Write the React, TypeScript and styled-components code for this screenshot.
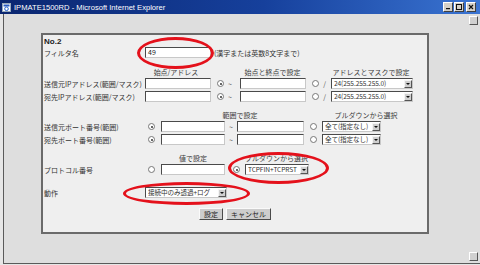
import React from 'react';
import styled, { createGlobalStyle, css } from 'styled-components';

const GlobalStyle = createGlobalStyle`
  html, body { margin: 0; padding: 0; background: #dcdcdc; }
  body { font-family: "Noto Sans CJK JP", "Liberation Sans", sans-serif; }
`

const Window = styled.div`
  width: 480px;
  height: 265px;
  display: flex;
  flex-direction: column;
  background: #e6e6e6;
  overflow: hidden;
`
const TitleBar = styled.div`
  height: 14px;
  flex: none;
  display: flex;
  align-items: center;
  padding: 0 4px 0 2px;
  background: linear-gradient(to right, #0a2670 0%, #16409c 55%, #3a74d2 100%);
  color: #fff;
  font-family: "Liberation Sans", Arial, sans-serif;
  font-size: 7.6px;
`
const TitleText = styled.span`
  margin-left: 3px;
  white-space: nowrap;
`
const TitleButtons = styled.div`
  margin-left: auto;
  display: flex;
  gap: 1px;
`
const TitleBtn = styled.span<{ $gap?: number }>`
  width: 8px;
  height: 8px;
  display: flex;
  align-items: center;
  justify-content: center;
  margin-left: ${p => p.$gap || 0}px;
  background: #d4d0c8;
  border: 1px solid;
  border-color: #fff #404040 #404040 #fff;
`
const Body = styled.div`
  flex: 1;
  display: flex;
  padding: 0 0 1px 3px;
`
const Page = styled.div`
  flex: 1;
  border-left: 1px solid #5a5a5a;
  border-bottom: 1px solid #5a5a5a;
  background: #dedede;
  padding: 19px 0 0 37px;
`
const ScrollCol = styled.div`
  width: 13px;
  display: flex;
  flex-direction: column;
  justify-content: space-between;
  align-items: center;
  padding: 2px 0 2px;
  background: #dedede;
  border-bottom: 1px solid #5a5a5a;
`
const ScrollBtn = styled.span`
  width: 7px;
  height: 7px;
  background: #d0d0d0;
  border: 1px solid;
  border-color: #fff #555 #555 #fff;
`
const Panel = styled.div`
  width: 388px;
  height: 201px;
  box-sizing: border-box;
  border: 2px solid #6a6a6a;
  background: #efefef;
  padding: 0 0 0 1px;
  font-size: 7px;
  color: #333;
`
const Line = styled.div<{ $mt?: number; $h?: number }>`
  display: flex;
  align-items: center;
  height: ${p => p.$h || 13}px;
  margin-top: ${p => p.$mt || 0}px;
  white-space: nowrap;
`
const No = styled.span`
  font-family: "Liberation Sans", Arial, sans-serif;
  font-weight: bold;
  font-size: 8px;
  color: #222;
`
const Label = styled.span`
  width: 101px;
  flex: none;
`
const boxLook = css`
  height: 11px;
  box-sizing: border-box;
  background: #fff;
  border: 1px solid;
  border-color: #4a4a4a #c8c8c8 #c8c8c8 #4a4a4a;
`
const Field = styled.div<{ $w: number; $ml?: number }>`
  ${boxLook};
  flex: none;
  width: ${p => p.$w}px;
  margin-left: ${p => p.$ml || 0}px;
  padding-left: 2px;
  line-height: 9px;
  color: #222;
`
const Radio = styled.span<{ $on?: boolean; $ml?: number }>`
  flex: none;
  width: 5px;
  height: 5px;
  margin: 0 1px 0 ${p => (p.$ml || 0) + 1}px;
  border-radius: 50%;
  border: 1px solid #777;
  background: #fff;
  position: relative;
  ${p => p.$on && css`
    &::after {
      content: '';
      position: absolute;
      left: 1.5px;
      top: 1.5px;
      width: 2px;
      height: 2px;
      border-radius: 50%;
      background: #333;
    }
  `}
`
const Sep = styled.span<{ $w: number }>`
  flex: none;
  width: ${p => p.$w}px;
  text-align: center;
  color: #555;
`
const Select = styled.div<{ $w: number; $ml?: number }>`
  ${boxLook};
  flex: none;
  display: flex;
  align-items: center;
  width: ${p => p.$w}px;
  margin-left: ${p => p.$ml || 0}px;
  padding: 0 0 0 2px;
  color: #333;
`
const SelectValue = styled.span`
  flex: 1;
  overflow: hidden;
  font-size: 6.6px;
  letter-spacing: -0.1px;
  line-height: 9px;
`
const SelectArrow = styled.span`
  flex: none;
  width: 8px;
  height: 8px;
  box-sizing: border-box;
  background: #cfcfcf;
  border: 1px solid;
  border-color: #f4f4f4 #555 #555 #f4f4f4;
  display: flex;
  align-items: center;
  justify-content: center;
  &::after {
    content: '';
    border-left: 2px solid transparent;
    border-right: 2px solid transparent;
    border-top: 2px solid #111;
  }
`
const HeadCell = styled.span<{ $w: number; $ml?: number }>`
  flex: none;
  width: ${p => p.$w}px;
  margin-left: ${p => p.$ml || 0}px;
  text-align: center;
  color: #3a3a3a;
`
const Note = styled.span`
  margin-left: 3px;
`
const Circled = styled.div`
  position: relative;
  flex: none;
  display: flex;
  align-items: center;
`
const Ellipse = styled.span<{ $t: number; $r: number; $b: number; $l: number }>`
  position: absolute;
  top: ${p => p.$t}px;
  right: ${p => p.$r}px;
  bottom: ${p => p.$b}px;
  left: ${p => p.$l}px;
  border: 3px solid #e4111b;
  border-radius: 50%;
  pointer-events: none;
  z-index: 2;
`
const Buttons = styled.div`
  display: flex;
  justify-content: center;
  gap: 3px;
  margin-top: 9px;
  padding-right: 1px;
`
const Button = styled.button`
  height: 12px;
  padding: 0 4px;
  font-family: inherit;
  font-size: 7px;
  line-height: 10px;
  color: #222;
  background: #cdcdcd;
  border: 1px solid;
  border-color: #fafafa #4a4a4a #4a4a4a #fafafa;
`

const App = () => {
    return (
        <Window>
            <GlobalStyle />
            <TitleBar>
                <svg width="9" height="9" viewBox="0 0 9 9">
                    <rect x="0.5" y="0.5" width="8" height="8" fill="#fff" stroke="#9ab" />
                    <rect x="1.5" y="1.5" width="6" height="2" fill="#2a5cc0" />
                    <circle cx="4.5" cy="5.8" r="1.8" fill="none" stroke="#1e5fd0" strokeWidth="1" />
                </svg>
                <TitleText>IPMATE1500RD - Microsoft Internet Explorer</TitleText>
                <TitleButtons>
                    <TitleBtn>
                        <svg width="6" height="6" viewBox="0 0 6 6"><rect x="1" y="4" width="4" height="1.2" fill="#111" /></svg>
                    </TitleBtn>
                    <TitleBtn>
                        <svg width="6" height="6" viewBox="0 0 6 6"><rect x="0.5" y="0.5" width="5" height="5" fill="none" stroke="#111" strokeWidth="1" /></svg>
                    </TitleBtn>
                    <TitleBtn $gap={1}>
                        <svg width="6" height="6" viewBox="0 0 6 6"><path d="M1 1L5 5M5 1L1 5" stroke="#111" strokeWidth="1.2" /></svg>
                    </TitleBtn>
                </TitleButtons>
            </TitleBar>
            <Body>
                <Page>
                    <Panel>
                        <Line $h={12}><No>No.2</No></Line>
                        <Line $h={11}>
                            <Label>フィルタ名</Label>
                            <Circled>
                                <Field $w={66}>49</Field>
                                <Ellipse $t={-10} $r={-3} $b={-11} $l={-8} />
                            </Circled>
                            <Note>(漢字または英数8文字まで)</Note>
                        </Line>

                        <Line $mt={9} $h={10}>
                            <HeadCell $ml={101} $w={62}>始点/アドレス</HeadCell>
                            <HeadCell $ml={29} $w={73}>始点と終点で設定</HeadCell>
                            <HeadCell $ml={22} $w={80}>アドレスとマスクで設定</HeadCell>
                        </Line>
                        <Line>
                            <Label>送信元IPアドレス(範囲/マスク)</Label>
                            <Field $w={66} />
                            <Radio $on $ml={5} />
                            <Sep $w={10}>~</Sep>
                            <Field $w={66} $ml={5} />
                            <Radio $ml={5} />
                            <Sep $w={9}>/</Sep>
                            <Select $w={82} $ml={2}><SelectValue>24(255.255.255.0)</SelectValue><SelectArrow /></Select>
                        </Line>
                        <Line>
                            <Label>宛先IPアドレス(範囲/マスク)</Label>
                            <Field $w={66} />
                            <Radio $on $ml={5} />
                            <Sep $w={10}>~</Sep>
                            <Field $w={66} $ml={5} />
                            <Radio $ml={5} />
                            <Sep $w={9}>/</Sep>
                            <Select $w={82} $ml={2}><SelectValue>24(255.255.255.0)</SelectValue><SelectArrow /></Select>
                        </Line>

                        <Line $mt={7} $h={10}>
                            <HeadCell $ml={115} $w={162}>範囲で設定</HeadCell>
                            <HeadCell $w={90}>プルダウンから選択</HeadCell>
                        </Line>
                        <Line>
                            <Label>送信元ポート番号(範囲)</Label>
                            <Radio $on $ml={2} />
                            <Field $w={64} $ml={5} />
                            <Sep $w={12}>~</Sep>
                            <Field $w={67} />
                            <Radio $ml={5} />
                            <Select $w={59} $ml={4}><SelectValue>全て(指定なし)</SelectValue><SelectArrow /></Select>
                        </Line>
                        <Line>
                            <Label>宛先ポート番号(範囲)</Label>
                            <Radio $on $ml={2} />
                            <Field $w={64} $ml={5} />
                            <Sep $w={12}>~</Sep>
                            <Field $w={67} />
                            <Radio $ml={5} />
                            <Select $w={59} $ml={4}><SelectValue>全て(指定なし)</SelectValue><SelectArrow /></Select>
                        </Line>

                        <Line $mt={7} $h={10}>
                            <HeadCell $ml={115} $w={68}>値で設定</HeadCell>
                            <HeadCell $ml={15} $w={69}>プルダウンから選択</HeadCell>
                        </Line>
                        <Line>
                            <Label>プロトコル番号</Label>
                            <Radio $ml={2} />
                            <Field $w={64} $ml={5} />
                            <Radio $on $ml={7} />
                            <Circled>
                                <Select $w={64} $ml={4}><SelectValue>TCPFIN+TCPRST</SelectValue><SelectArrow /></Select>
                                <Ellipse $t={-12} $r={-20} $b={-9} $l={-13} />
                            </Circled>
                        </Line>

                        <Line $mt={10}>
                            <Label>動作</Label>
                            <Circled>
                                <Select $w={82}><SelectValue>接続中のみ透過+ログ</SelectValue><SelectArrow /></Select>
                                <Ellipse $t={-5} $r={-23} $b={-7} $l={-22} />
                            </Circled>
                        </Line>

                        <Buttons>
                            <Button>設定</Button>
                            <Button>キャンセル</Button>
                        </Buttons>
                    </Panel>
                </Page>
                <ScrollCol>
                    <ScrollBtn />
                    <ScrollBtn />
                </ScrollCol>
            </Body>
        </Window>
    );
};

export default App;
